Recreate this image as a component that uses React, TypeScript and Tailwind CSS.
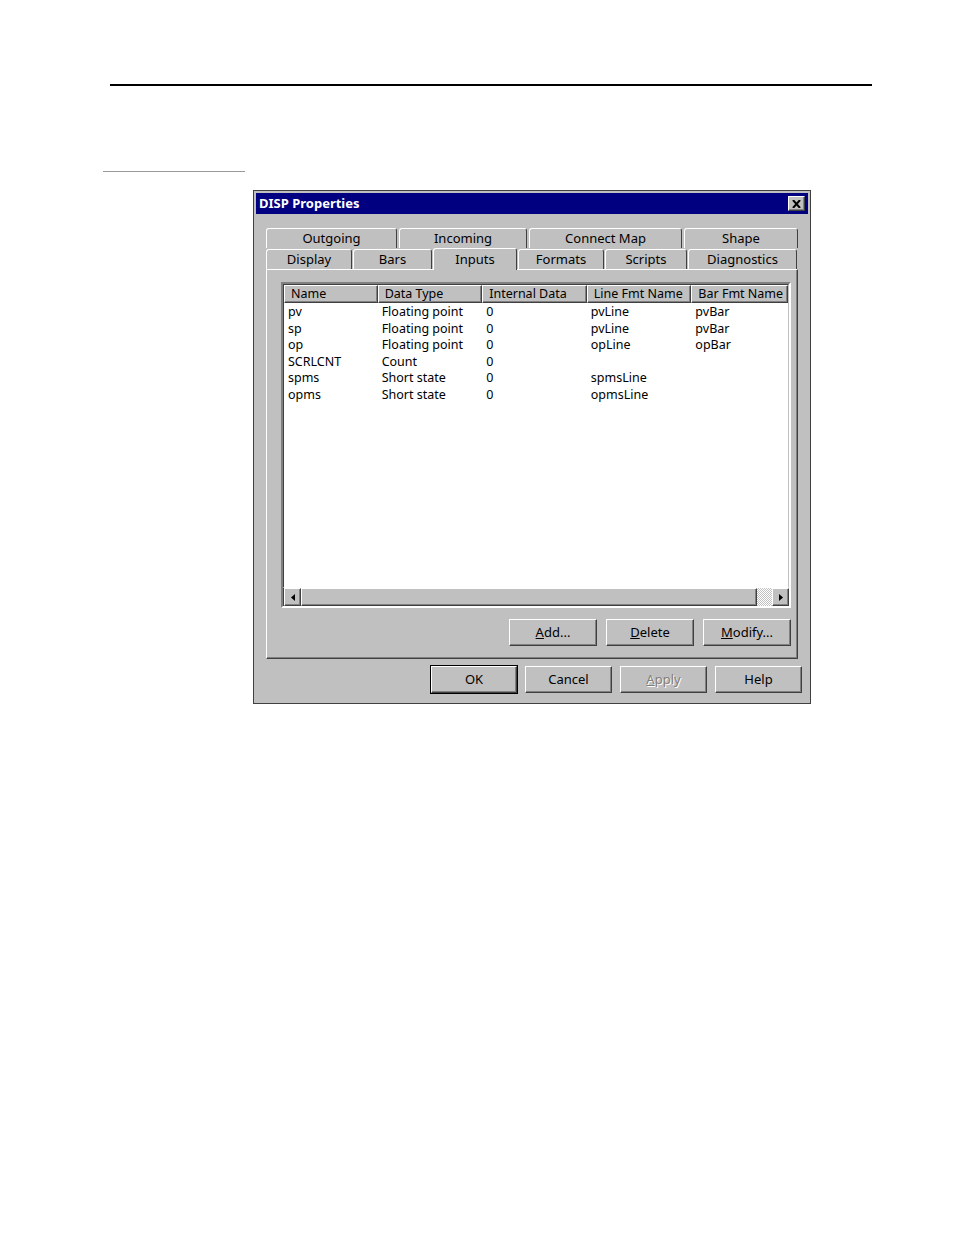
const raised = "border border-t-white border-l-white border-r-[#404040] border-b-[#404040] shadow-[inset_-1px_-1px_0_#808080]";

function Btn({ w, label, u, disabled, def }: { w: string; label: string; u?: number; disabled?: boolean; def?: boolean }) {
  const text = u === undefined ? label : (
    <>
      {label.slice(0, u)}
      <span className="underline">{label[u]}</span>
      {label.slice(u + 1)}
    </>
  );
  return (
    <div className={`${w} h-[27px] ${def ? "outline outline-1 outline-black" : ""} ${raised} bg-[#c0c0c0] flex items-center justify-center text-[13px] ${disabled ? "text-[#808080] [text-shadow:1px_1px_0_#fff]" : "text-black"}`}>
      {text}
    </div>
  );
}

const rows = [
  ["pv", "Floating point", "0", "pvLine", "pvBar"],
  ["sp", "Floating point", "0", "pvLine", "pvBar"],
  ["op", "Floating point", "0", "opLine", "opBar"],
  ["SCRLCNT", "Count", "0", "", ""],
  ["spms", "Short state", "0", "spmsLine", ""],
  ["opms", "Short state", "0", "opmsLine", ""],
];
const cols = ["w-[94px]", "w-[105px]", "w-[105px]", "w-[105px]", "w-[97px]"];
const heads = ["Name", "Data Type", "Internal Data", "Line Fmt Name", "Bar Fmt Name"];

function Tab({ w, label, sel }: { w: string; label: string; sel?: boolean }) {
  return (
    <div className={`${w} ${sel ? "h-[22px] -mb-[1px] z-10 bg-[#c0c0c0] border-b-0" : "h-[20px] mt-[2px]"} border border-t-white border-l-white border-r-[#404040] border-b-0 rounded-t-[3px] flex items-center justify-center text-[13px] bg-[#c0c0c0]`}>
      {label}
    </div>
  );
}

export default function App() {
  return (
    <div className="w-[954px] h-[1235px] bg-white relative font-['Liberation_Sans',Arial,sans-serif] text-black">
      <div className="pt-[84px] pl-[110px]">
        <div className="w-[762px] h-[2px] bg-black" />
      </div>
      <div className="pt-[85px] pl-[103px]">
        <div className="w-[142px] h-px bg-[#999]" />
      </div>
      <div className="ml-[253px] mt-[18px] w-[558px] h-[514px] bg-[#c0c0c0] border border-[#404040] p-[2px]">
        <div className="h-[21px] bg-[#000080] flex items-center justify-between px-[3px]">
          <span className="text-white font-bold text-[13px]">DISP Properties</span>
          <div className={`w-[17px] h-[15px] bg-[#c0c0c0] ${raised} flex items-center justify-center`}>
            <svg width="9" height="8" viewBox="0 0 9 8"><path d="M1 0L8 8M8 0L1 8" stroke="black" strokeWidth="2" /></svg>
          </div>
        </div>
        <div className="mt-[12px] ml-[10px] w-[532px]">
          <div className="flex gap-[2px]">
            <Tab w="w-[131px]" label="Outgoing" />
            <Tab w="w-[128px]" label="Incoming" />
            <Tab w="w-[153px]" label="Connect Map" />
            <Tab w="w-[114px]" label="Shape" />
          </div>
          <div className="flex gap-[1px] h-[21px] items-end">
            <Tab w="w-[86px]" label="Display" />
            <Tab w="w-[79px]" label="Bars" />
            <Tab w="w-[84px]" label="Inputs" sel />
            <Tab w="w-[86px]" label="Formats" />
            <Tab w="w-[82px]" label="Scripts" />
            <Tab w="w-[109px]" label="Diagnostics" />
          </div>
          <div className="h-[390px] border border-t-white border-l-white border-r-[#404040] border-b-[#404040] shadow-[inset_-1px_-1px_0_#808080] pt-[12px] pl-[14px]">
            <div className="w-[510px] h-[326px] bg-white border-2 border-t-[#808080] border-l-[#808080] border-r-white border-b-white flex flex-col">
              <div className="flex-1 border border-t-[#404040] border-l-[#404040] border-r-[#c0c0c0] border-b-transparent">
                <div className="flex">
                  {heads.map((h, i) => (
                    <div key={h} className={`${cols[i]} h-[18px] bg-[#c0c0c0] ${raised} pl-[6px] text-[12.5px] leading-[16px]`}>{h}</div>
                  ))}
                </div>
                <div className="pt-[1px]">
                  {rows.map((r) => (
                    <div key={r[0]} className="flex h-[16.5px] text-[12.5px] leading-[16px]">
                      {r.map((c, i) => (
                        <div key={i} className={`${cols[i]} pl-[4px]`}>{c}</div>
                      ))}
                    </div>
                  ))}
                </div>
              </div>
              <div className="h-[18px] flex bg-[#e0e0e0] border-l border-[#404040]">
                <div className={`w-[17px] bg-[#c0c0c0] ${raised} flex items-center justify-center`}>
                  <svg width="4" height="7"><path d="M4 0L0 3.5L4 7Z" fill="black" /></svg>
                </div>
                <div className={`w-[456px] bg-[#c0c0c0] ${raised}`} />
                <div className="flex-1 bg-[repeating-conic-gradient(#c0c0c0_0_25%,#fff_0_50%)] bg-[length:2px_2px]" />
                <div className={`w-[17px] bg-[#c0c0c0] ${raised} flex items-center justify-center`}>
                  <svg width="4" height="7"><path d="M0 0L4 3.5L0 7Z" fill="black" /></svg>
                </div>
              </div>
            </div>
            <div className="flex gap-[9px] mt-[11px] ml-[228px]">
              <Btn w="w-[88px]" label="Add..." u={0} />
              <Btn w="w-[88px]" label="Delete" u={0} />
              <Btn w="w-[88px]" label="Modify..." u={0} />
            </div>
          </div>
        </div>
        <div className="flex gap-[8px] mt-[7px] ml-[175px]">
          <Btn w="w-[86px]" label="OK" def />
          <Btn w="w-[87px]" label="Cancel" />
          <Btn w="w-[87px]" label="Apply" u={0} disabled />
          <Btn w="w-[87px]" label="Help" />
        </div>
      </div>
    </div>
  );
}
